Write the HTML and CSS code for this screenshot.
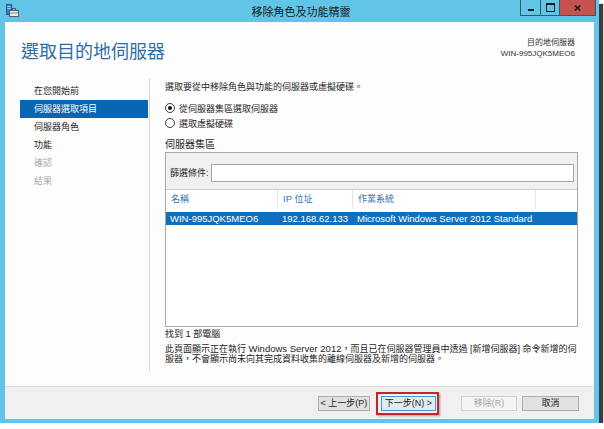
FILE: index.html
```html
<!DOCTYPE html>
<html lang="zh-Hant">
<head>
<meta charset="utf-8">
<title>移除角色及功能精靈</title>
<link rel="stylesheet" href="styles.css">
</head>
<body>
<div class="window">
  <div class="titlebar">
    <svg class="appicon" width="13" height="13" viewBox="0 0 13 13">
      <rect x="0.5" y="0.5" width="5" height="10" fill="#2d84cc" stroke="#1b5d96"/>
      <rect x="1.5" y="2" width="3" height="1" fill="#a9d6f7"/>
      <rect x="1.5" y="4" width="3" height="1" fill="#a9d6f7"/>
      <rect x="6.5" y="4.5" width="3" height="2" fill="none" stroke="#5c5c5c"/>
      <rect x="3.5" y="6.5" width="9" height="6" fill="#ececec" stroke="#5c5c5c"/>
      <rect x="4" y="8.5" width="8" height="1" fill="#8a8a8a"/>
    </svg>
    <div class="title">移除角色及功能精靈</div>
    <div class="controls">
      <span class="ctl min"></span>
      <span class="ctl max"></span>
      <span class="ctl close">
        <svg width="7" height="6" viewBox="0 0 7 6"><path d="M0.8 0.5 L6.2 5.5 M6.2 0.5 L0.8 5.5" stroke="#1a1a1a" stroke-width="1.6"/></svg>
      </span>
    </div>
  </div>
  <div class="client">
    <div class="header">
      <h1 class="page-title">選取目的地伺服器</h1>
      <div class="dest">
        <div>目的地伺服器</div>
        <div>WIN-995JQK5MEO6</div>
      </div>
    </div>
    <div class="main">
      <nav class="nav">
        <div class="nav-item">在您開始前</div>
        <div class="nav-item active">伺服器選取項目</div>
        <div class="nav-item">伺服器角色</div>
        <div class="nav-item">功能</div>
        <div class="nav-item disabled">確認</div>
        <div class="nav-item disabled">結果</div>
      </nav>
      <section class="content">
        <p class="intro">選取要從中移除角色與功能的伺服器或虛擬硬碟。</p>
        <div class="radios">
          <div class="radio-row"><span class="radio checked"></span>從伺服器集區選取伺服器</div>
          <div class="radio-row"><span class="radio"></span>選取虛擬硬碟</div>
        </div>
        <div class="group-label">伺服器集區</div>
        <div class="pool">
          <div class="filter">
            <span class="filter-label">篩選條件:</span>
            <span class="filter-input"></span>
          </div>
          <div class="grid-row head">
            <span class="cell">名稱</span>
            <span class="cell"><span class="latin">IP</span> 位址</span>
            <span class="cell">作業系統</span>
            <span class="cell last"></span>
          </div>
          <div class="grid-row item selected">
            <span class="cell">WIN-995JQK5MEO6</span>
            <span class="cell">192.168.62.133</span>
            <span class="cell wide">Microsoft Windows Server 2012 Standard</span>
          </div>
        </div>
        <p class="found">找到 <span class="latin">1</span> 部電腦</p>
        <p class="desc">此頁面顯示正在執行 <span class="latin">Windows Server 2012</span>，而且已在伺服器管理員中透過 [新增伺服器] 命令新增的伺<br>服器，不會顯示尚未向其完成資料收集的離線伺服器及新增的伺服器。</p>
      </section>
    </div>
    <div class="footer">
      <button class="btn prev">&lt; 上一步(P)</button>
      <button class="btn next">下一步(N) &gt;</button>
      <button class="btn remove" disabled>移除(R)</button>
      <button class="btn cancel">取消</button>
    </div>
  </div>
</div>
</body>
</html>
```
FILE: styles.css
```css
* { box-sizing: border-box; }
html, body { margin: 0; padding: 0; background: #ffffff; }
body {
  font-family: "Liberation Sans", "Noto Sans CJK TC", sans-serif;
  font-size: 9px;
  color: #1e1e1e;
}
.latin { font-size: 9.5px; }

.window {
  width: 599px;
  height: 423px;
  background: #62c5e8;
  display: flex;
  flex-direction: column;
  box-shadow: 4px 4px 1px rgba(40, 40, 40, 0.9);
}

.titlebar {
  height: 22px;
  flex: none;
  display: grid;
  grid-template-columns: 1fr auto 1fr;
  align-items: start;
  padding: 0 3px 0 6px;
}
.appicon { margin-top: 4px; display: block; }
.title {
  font-size: 11px;
  line-height: 22px;
  color: #1a1a1a;
  font-family: "Noto Sans CJK TC", sans-serif;
}
.controls { justify-self: end; display: flex; }
.ctl {
  height: 16px;
  border: 1px solid #2d5a70;
  border-top: none;
  display: flex;
  align-items: center;
  justify-content: center;
}
.ctl + .ctl { border-left: none; }
.min { width: 21px; }
.max { width: 19px; }
.close { width: 36px; background: #c75050; }
.min::before {
  content: "";
  width: 6px;
  height: 2px;
  background: #1a1a1a;
  margin-top: 4px;
}
.max::before {
  content: "";
  width: 7px;
  height: 6px;
  border: 1px solid #1a1a1a;
  border-top-width: 2px;
}

.client {
  flex: 1;
  margin: 0 5px 4px 5px;
  background: #fdfdfd;
  display: flex;
  flex-direction: column;
}

.header {
  height: 56px;
  flex: none;
  display: flex;
  justify-content: space-between;
  align-items: flex-start;
  padding: 17px 19px 0 16px;
}
.page-title {
  margin: 0;
  font-size: 18px;
  line-height: 22px;
  font-weight: normal;
  color: #2f6ea5;
  font-family: "Noto Sans CJK TC", sans-serif;
}
.dest {
  margin-top: -1px;
  text-align: right;
  font-size: 8px;
  line-height: 10.5px;
  color: #333;
}

.main { flex: 1; display: flex; min-height: 0; }

.nav {
  width: 145px;
  flex: none;
  border-right: 1px solid #d6d6d6;
  padding-top: 4px;
  margin-bottom: 15px;
}
.nav-item {
  height: 18px;
  line-height: 18px;
  margin: 0 1px 0 15px;
  padding-left: 14px;
  color: #1e1e1e;
}
.nav-item.active { background: #0a66b2; color: #ffffff; }
.nav-item.disabled { color: #a8a8a8; }

.content {
  flex: 1;
  min-width: 0;
  padding: 3px 16px 0 15px;
}
.intro { margin: 0; line-height: 12px; }

.radios { margin-top: 7.5px; }
.radio-row {
  height: 15px;
  display: flex;
  align-items: center;
  gap: 4px;
}
.radio {
  width: 10px;
  height: 10px;
  border-radius: 50%;
  border: 1px solid #3c3c3c;
  background: #fff;
  display: flex;
  align-items: center;
  justify-content: center;
}
.radio.checked::after {
  content: "";
  width: 4px;
  height: 4px;
  border-radius: 50%;
  background: #111;
}

.group-label {
  margin-top: 8.5px;
  line-height: 12px;
  font-size: 10px;
}

.pool {
  margin-top: 1px;
  height: 175px;
  border: 1px solid #a9a9a9;
  background: #ffffff;
}
.filter {
  height: 37px;
  padding: 3px 3px 0 4px;
  background: #f0f0f0;
  border-bottom: 1px solid #c9c9c9;
  display: flex;
  align-items: center;
  gap: 2px;
}
.filter-label { flex: none; }
.filter-input {
  flex: 1;
  height: 18px;
  background: #ffffff;
  border: 1px solid #a6a6a6;
}

.grid-row {
  display: grid;
  grid-template-columns: 112px 75px 183px 1fr;
}
.grid-row.head { height: 19px; align-items: stretch; }
.grid-row.head .cell {
  color: #2f77b7;
  padding-left: 5px;
  line-height: 18px;
  border-right: 1px solid #e6e6e6;
}
.grid-row.head .cell.last { border-right: none; }
.grid-row.item {
  margin-top: 3px;
  height: 13px;
  line-height: 13px;
  font-size: 9.5px;
}
.grid-row.item .cell { padding-left: 4px; white-space: nowrap; }
.grid-row.item .cell.wide { grid-column: 3 / 5; }
.grid-row.selected { background: #1170bd; color: #ffffff; }

.found { margin: 1px 0 0 0; line-height: 12px; }
.desc {
  margin: 4px 0 0 0;
  line-height: 10px;
  white-space: nowrap;
}

.footer {
  height: 33px;
  flex: none;
  background: #f0f0f0;
  border-top: 1px solid #dcdcdc;
  display: flex;
  align-items: flex-start;
  padding: 9px 15px 0 0;
  justify-content: flex-end;
}
.btn {
  height: 15px;
  margin: 0;
  padding: 0;
  font: inherit;
  font-size: 9px;
  line-height: 13px;
  color: #1e1e1e;
  background: #e1e1e1;
  border: 1px solid #adadad;
  border-radius: 0;
}
.prev { width: 52px; }
.next {
  width: 55px;
  margin-left: 11px;
  background: #e3ebf2;
  border-color: #4f95cf;
  position: relative;
}
.next::after {
  content: "";
  position: absolute;
  left: -6px;
  top: -5px;
  right: -4px;
  bottom: -5px;
  border: 2px solid #c2262c;
  box-shadow: 1px 1px 2px rgba(0, 0, 0, 0.35);
}
.remove {
  width: 56px;
  margin-left: 25px;
  background: #f4f4f4;
  border-color: #cfcfcf;
  color: #a6a6a6;
}
.cancel { width: 57px; margin-left: 5px; }
```
